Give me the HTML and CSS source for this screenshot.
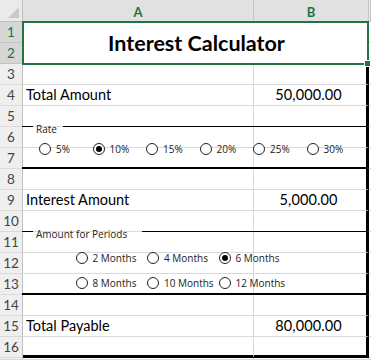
FILE: index.html
```html
<!DOCTYPE html>
<html>
<head>
<meta charset="utf-8">
<link rel="stylesheet" href="styles.css">
</head>
<body>
<div class="sheet">
  <div class="grid">
    <div class="corner"><svg class="tri" width="22" height="21" viewBox="0 0 22 21"><polygon points="8,18 19,18 19,7" fill="#c9c9c9"/></svg></div>
    <div class="ch">A</div>
    <div class="ch">B</div>
    <div class="ch end"></div>

    <div class="rh sel">1</div>
    <div class="title">Interest Calculator</div>
    <div class="edge"></div>
    <div class="rh sel">2</div>
    <div class="edge"></div>

    <div class="rh">3</div><div class="c"></div><div class="c b"></div><div class="edge"></div>
    <div class="rh">4</div><div class="c">Total Amount</div><div class="c b num">50,000.00</div><div class="edge"></div>
    <div class="rh">5</div><div class="c"></div><div class="c b"></div><div class="edge"></div>
    <div class="rh">6</div><div class="c"></div><div class="c b"></div><div class="edge"></div>
    <div class="rh">7</div><div class="c"></div><div class="c b"></div><div class="edge"></div>
    <div class="rh">8</div><div class="c"></div><div class="c b"></div><div class="edge"></div>
    <div class="rh">9</div><div class="c">Interest Amount</div><div class="c b num">5,000.00</div><div class="edge"></div>
    <div class="rh">10</div><div class="c"></div><div class="c b"></div><div class="edge"></div>
    <div class="rh">11</div><div class="c"></div><div class="c b"></div><div class="edge"></div>
    <div class="rh">12</div><div class="c"></div><div class="c b"></div><div class="edge"></div>
    <div class="rh">13</div><div class="c"></div><div class="c b"></div><div class="edge"></div>
    <div class="rh">14</div><div class="c"></div><div class="c b"></div><div class="edge"></div>
    <div class="rh">15</div><div class="c">Total Payable</div><div class="c b num">80,000.00</div><div class="edge"></div>
    <div class="rh">16</div><div class="c last"></div><div class="c b last"></div><div class="edge"></div>
    <div class="rh"></div><div class="c"></div><div class="c"></div><div class="edge"></div>
  </div>

  <div class="selection"></div>
  <div class="handle"></div>

  <div class="group rate">
    <div class="group-head"><span class="seg lead"></span><span class="legend">Rate</span><span class="seg fill"></span></div>
    <div class="radios">
      <div class="radio"><span class="dot"></span><span class="lbl">5%</span></div>
      <div class="radio on"><span class="dot"></span><span class="lbl">10%</span></div>
      <div class="radio"><span class="dot"></span><span class="lbl">15%</span></div>
      <div class="radio"><span class="dot"></span><span class="lbl">20%</span></div>
      <div class="radio"><span class="dot"></span><span class="lbl">25%</span></div>
      <div class="radio"><span class="dot"></span><span class="lbl">30%</span></div>
    </div>
  </div>

  <div class="group periods">
    <div class="group-head"><span class="seg lead"></span><span class="legend">Amount for Periods</span><span class="seg fill"></span></div>
    <div class="radios">
      <div class="radio"><span class="dot"></span><span class="lbl">2 Months</span></div>
      <div class="radio"><span class="dot"></span><span class="lbl">4 Months</span></div>
      <div class="radio on"><span class="dot"></span><span class="lbl">6 Months</span></div>
    </div>
    <div class="radios second">
      <div class="radio"><span class="dot"></span><span class="lbl">8 Months</span></div>
      <div class="radio"><span class="dot"></span><span class="lbl">10 Months</span></div>
      <div class="radio"><span class="dot"></span><span class="lbl">12 Months</span></div>
    </div>
  </div>
</div>
</body>
</html>
```

FILE: styles.css
```css
html, body {
  margin: 0;
  padding: 0;
  background: #ffffff;
}

.sheet {
  position: relative;
  width: 371px;
  height: 360px;
  overflow: hidden;
  font-family: Lato, "Liberation Sans", sans-serif;
  color: #000;
}

.grid {
  display: grid;
  grid-template-columns: 23px 231px 115px 2px;
  grid-template-rows: 22px repeat(16, 21px) 2px;
}

.grid > div {
  box-sizing: border-box;
  border-right: 1px solid #d9d9d9;
  border-bottom: 1px solid #d9d9d9;
}

.corner {
  background: #eaeaea;
  border-right-color: #c0c0c0 !important;
  border-bottom-color: #bdbdbd !important;
}

.tri {
  display: block;
}

.ch {
  background: #e1e1e1;
  border-right-color: #c6c6c6 !important;
  border-bottom-color: #bdbdbd !important;
  color: #217346;
  font-weight: 700;
  font-size: 13px;
  display: flex;
  align-items: center;
  justify-content: center;
  padding-top: 2px;
}

.ch.end {
  background: #e9e9e9;
}

.rh {
  background: #efefef;
  color: #444;
  border-right-color: #c0c0c0 !important;
  border-bottom-color: #dadada !important;
  font-size: 13.5px;
  display: flex;
  align-items: center;
  justify-content: center;
}

.rh.sel {
  background: #d6d6d6;
  color: #217346;
  border-bottom-color: #c4c4c4 !important;
}

.title {
  grid-column: 2 / 4;
  grid-row: 2 / 4;
  display: flex;
  align-items: center;
  justify-content: center;
  font-weight: 700;
  font-size: 21.5px;
  line-height: 26px;
  padding-left: 2px;
}

.c {
  display: flex;
  align-items: center;
  font-size: 14.5px;
  line-height: 16px;
  padding-left: 3px;
}

.c.num {
  justify-content: center;
  padding-left: 0;
  padding-right: 3px;
  letter-spacing: 0.1px;
}

.c.b {
  border-right: 3px solid #000 !important;
}

.c.last {
  border-bottom: 3px solid #000 !important;
}

.edge {
  border-right: none !important;
}

.selection {
  position: absolute;
  left: 22px;
  top: 21px;
  width: 347px;
  height: 44px;
  box-sizing: border-box;
  border: 2px solid #217346;
}

.handle {
  position: absolute;
  left: 365px;
  top: 61px;
  width: 5px;
  height: 5px;
  background: #217346;
  outline: 1px solid #ffffff;
}

.group {
  position: absolute;
  left: 22px;
  width: 346px;
  box-sizing: border-box;
  border-bottom: 2px solid #000;
  font-family: "Open Sans", "Noto Sans", sans-serif;
  font-size: 10px;
  color: #222;
}

.rate {
  top: 126px;
  height: 43px;
}

.periods {
  top: 231px;
  height: 64px;
}

.group-head {
  display: flex;
  height: 14px;
  margin-top: -4px;
  line-height: 14px;
}

.seg {
  display: block;
  height: 0;
  margin-top: 4px;
  border-top: 1px solid #000;
}

.seg.lead {
  width: 11px;
}

.seg.fill {
  flex: 1;
}

.legend {
  padding-left: 3px;
  padding-right: 6px;
}

.periods .legend {
  padding-right: 15px;
}

.radios {
  display: flex;
  line-height: 14px;
}

.rate .radios {
  margin-top: 6px;
  padding-left: 17px;
}

.rate .radio {
  width: 53.5px;
}

.periods .radios {
  margin-top: 10px;
  padding-left: 53.5px;
}

.periods .radios.second {
  margin-top: 11px;
}

.periods .radio {
  width: 71.5px;
}

.radio {
  display: flex;
  align-items: center;
  flex: none;
}

.dot {
  box-sizing: border-box;
  width: 12px;
  height: 12px;
  border: 1px solid #222;
  border-radius: 50%;
  background: #fff;
  display: flex;
  align-items: center;
  justify-content: center;
  flex: none;
}

.radio.on .dot::after {
  content: "";
  width: 6px;
  height: 6px;
  border-radius: 50%;
  background: #000;
}

.lbl {
  margin-left: 5px;
  white-space: nowrap;
}
```
